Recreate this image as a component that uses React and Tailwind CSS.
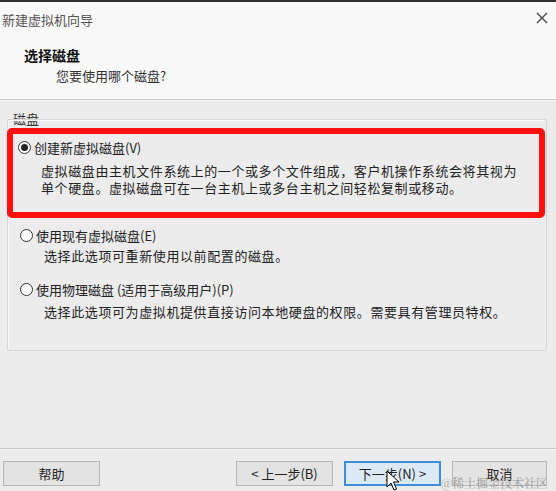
import React from "react";

const font = { fontFamily: '"Noto Sans CJK SC", "Microsoft YaHei", sans-serif' };

function Radio({ checked }) {
  return (
    <span className="relative flex h-[13px] w-[13px] shrink-0 items-center justify-center rounded-full border border-[#333] bg-white">
      {checked && <span className="h-[7px] w-[7px] rounded-full bg-[#222]" />}
    </span>
  );
}

function Btn({ children, focus, className = "" }) {
  return (
    <div
      className={
        "flex h-[25px] items-center justify-center text-[13px] text-[#222] " +
        (focus
          ? "border-2 border-[#3c8fd6] bg-[#dbe9f5] "
          : "border border-[#b5b5b5] bg-[#e3e3e3] ") +
        className
      }
    >
      {children}
    </div>
  );
}

export default function App() {
  return (
    <div
      className="relative flex h-[491px] w-[556px] flex-col overflow-hidden bg-[#ececec] text-[#222]"
      style={font}
    >
      <div className="h-[2px] shrink-0 bg-[#2e2e2e]" />
      {/* header */}
      <div className="flex h-[97px] shrink-0 flex-col bg-[#f9f9f9]">
        <div className="flex h-[34px] items-center justify-between pl-[2px] pr-[8px]">
          <span className="text-[13px] leading-none text-[#555]">新建虚拟机向导</span>
          <svg width="12" height="12" viewBox="0 0 12 12" className="mb-[2px]">
            <path d="M1 1 L11 11 M11 1 L1 11" stroke="#444" strokeWidth="1.4" />
          </svg>
        </div>
        <div className="pl-[24px] pt-[10px] text-[14px] font-bold leading-[18px] text-[#111]">选择磁盘</div>
        <div className="pl-[56px] pt-[3px] text-[13px] leading-[18px] text-[#333]">您要使用哪个磁盘?</div>
      </div>
      <div className="h-[1px] shrink-0 bg-[#c9c9c9]" />
      <div className="h-[1px] shrink-0 bg-[#f4f4f4]" />

      {/* body */}
      <div className="flex flex-1 flex-col px-[7px] pt-[9px]">
        <div className="relative flex h-[241px] flex-col">
          <div className="pl-[6px] text-[13px] leading-[18px] text-[#333]">磁盘</div>
          <div className="pointer-events-none absolute left-0 right-[2px] top-[9px] bottom-0 rounded-[2px] border border-[#d6d6d6] shadow-[inset_1px_1px_0_#fafafa]" />
          {/* option 1 with red highlight */}
          <div className="relative mr-[4px] flex h-[90px] flex-col rounded-[5px] border-[6px] border-[#ff1010] pl-[5px] pt-[5px]">
            <div className="flex items-center gap-[3px]">
              <Radio checked />
              <span className="text-[13px] leading-[17px]">创建新虚拟磁盘(V)</span>
            </div>
            <div className="mt-[6px] pl-[23px] text-[13px] leading-[17px] tracking-[0.6px] text-[#222]">
              <div>虚拟磁盘由主机文件系统上的一个或多个文件组成，客户机操作系统会将其视为</div>
              <div>单个硬盘。虚拟磁盘可在一台主机上或多台主机之间轻松复制或移动。</div>
            </div>
          </div>
          <div className="mt-[9px] flex items-center gap-[3px] pl-[13px]">
            <Radio />
            <span className="text-[13px] leading-[17px]">使用现有虚拟磁盘(E)</span>
          </div>
          <div className="mt-[3px] pl-[37px] text-[13px] leading-[17px] tracking-[0.6px]">选择此选项可重新使用以前配置的磁盘。</div>
          <div className="mt-[17px] flex items-center gap-[3px] pl-[13px]">
            <Radio />
            <span className="text-[13px] leading-[17px]">使用物理磁盘 (适用于高级用户)(P)</span>
          </div>
          <div className="mt-[5px] pl-[37px] text-[13px] leading-[17px] tracking-[0.6px]">选择此选项可为虚拟机提供直接访问本地硬盘的权限。需要具有管理员特权。</div>
        </div>
      </div>

      {/* bottom separator */}
      <div className="h-[1px] shrink-0 bg-[#c4c4c4]" />
      <div className="h-[1px] shrink-0 bg-[#f7f7f7]" />
      <div className="flex h-[41px] shrink-0 items-start px-[3px] pt-[11px]">
        <Btn className="w-[97px]">帮助</Btn>
        <div className="flex-1" />
        <Btn className="w-[97px]">&lt; 上一步(B)</Btn>
        <Btn focus className="ml-[11px] w-[97px]">下一步(N) &gt;</Btn>
        <Btn className="ml-[11px] mr-[6px] w-[95px]">取消</Btn>
      </div>

      {/* watermark */}
      <div className="pointer-events-none absolute bottom-[2px] right-[8px] text-[12px] leading-none text-[#8a8a8a] opacity-80" style={{ fontFamily: '"Noto Serif CJK SC", "Noto Sans CJK SC", serif' }}>
        @稀土掘金技术社区
      </div>

      {/* mouse cursor */}
      <svg className="pointer-events-none absolute left-[386px] top-[470px]" width="14" height="22" viewBox="0 0 14 22">
        <path d="M1 1 L1 17 L5 13 L8 20 L10.5 19 L7.5 12 L13 12 Z" fill="#fff" stroke="#000" strokeWidth="1" strokeLinejoin="round" />
      </svg>
    </div>
  );
}
